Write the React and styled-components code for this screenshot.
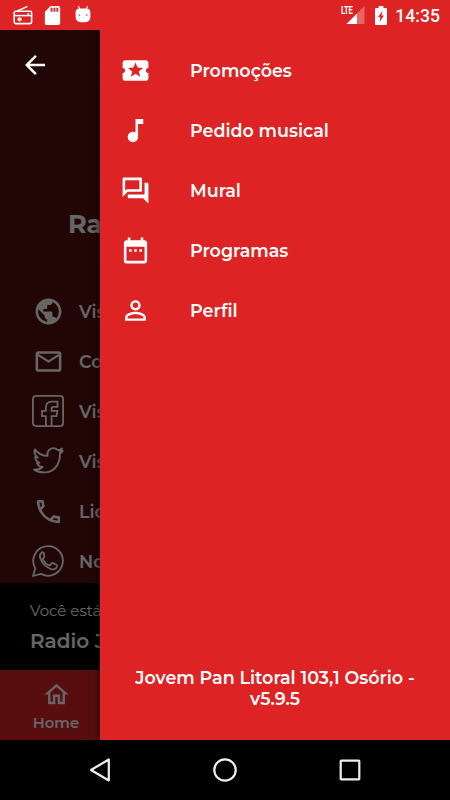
import React from "react";

import styled, { createGlobalStyle } from "styled-components";
import {
  MdArrowBack,
  MdDateRange,
  MdLocalActivity,
  MdMailOutline,
  MdMusicNote,
  MdOutlineHome,
  MdOutlinePhone,
  MdOutlineQuestionAnswer,
  MdPersonOutline,
  MdPublic,
  MdSdCard,
} from "react-icons/md";

// Icons
const RadioIcon = () => (
  <svg width="20" height="20" viewBox="0 0 20 20" fill="none" stroke="#fff">
    <path d="M4.5 6 14.5 1.3" strokeWidth="1.4" />
    <rect x="1.2" y="6.2" width="17.4" height="12.4" rx="1.6" strokeWidth="1.6" />
    <path d="M1.5 10.6h17" strokeWidth="1.5" />
    <path d="M15.2 8v2" strokeWidth="1.4" />
    <circle cx="6.6" cy="14.3" r="2.1" fill="#fff" stroke="none" />
  </svg>
);

const AndroidIcon = () => (
  <svg width="16" height="18" viewBox="0 0 16 18">
    <path d="M3.3 1 5 4.4M12.7 1 11 4.4" stroke="#fff" strokeWidth="1.1" />
    <path
      fill="#fff"
      d="M4.5 3.5h7A4 4 0 0 1 15.4 7.5v4.8a5 5 0 0 1-5 5H5.6a5 5 0 0 1-5-5V7.5A4 4 0 0 1 4.5 3.5z"
    />
    <circle cx="4.3" cy="10" r="1" fill="#e88080" />
    <circle cx="11.7" cy="10" r="1" fill="#e88080" />
  </svg>
);

const SignalIcon = () => (
  <svg width="19" height="18" viewBox="0 0 19 18">
    <path d="M18.5 0v18H.5z" fill="#fff" opacity=".3" />
    <path d="M11 7.5V18H.5z" fill="#fff" />
  </svg>
);

const BatteryIcon = () => (
  <svg width="12" height="19" viewBox="0 0 12 19">
    <path
      fill="#fff"
      fillRule="evenodd"
      d="M3.6 0h4.8v2H11q1 0 1 1v15q0 1-1 1H1q-1 0-1-1V3q0-1 1-1h2.6zM7.4 5 3 11h2.4l-.8 5L9 9.6H6.6z"
    />
  </svg>
);

const FacebookIcon = () => (
  <svg width="32" height="32" viewBox="0 0 32 32" fill="none" stroke="#fff" strokeWidth="1.8">
    <rect x="0.9" y="0.9" width="30.2" height="30.2" rx="3" />
    <path d="M13.9 31V21.2H10v-5.4h3.9v-3.4c0-3.6 2.2-5.7 5.6-5.7h6v5.2h-4.2c-1.3 0-1.7.6-1.7 1.8v2.1h5.8l-.9 5.4h-4.9V31" />
  </svg>
);

const TwitterIcon = () => (
  <svg
    width="32"
    height="32"
    viewBox="0 0 32 32"
    fill="none"
    stroke="#fff"
    strokeWidth="1.9"
    strokeLinejoin="round"
  >
    <path d="M2.8 4.4c3 3.9 7.7 6.4 12.7 6.5-.8-4.5 2-7.6 5.8-7.8 2 0 3.4.8 4.6 2 1.6-.2 3-.8 4.1-1.5-.5 1.5-1.3 2.5-2.3 3.1l3-.7c-.7 1.2-1.6 2-2.7 2.8C28.1 19.4 22 27.4 12.5 27.4c-4.1 0-7.7-1-10.4-2.8 3.8.2 6.5-.7 8.5-2.6-3-.4-5-2-5.6-4.1l2.5-.1c-2.7-1.1-4.3-3.3-4.3-5.9l2.6.7C2.8 10.3 1.9 7.7 2.8 4.4z" />
  </svg>
);

const WhatsappIcon = () => (
  <svg
    width="32"
    height="32"
    viewBox="0 0 32 32"
    fill="none"
    stroke="#fff"
    strokeWidth="1.8"
    strokeLinejoin="round"
  >
    <path d="M1 31l2.3-7.6A14.8 14.8 0 1 1 9 28.9z" />
    <path d="M11.5 7.5c-.6-.3-1.8-.1-2.3.6C7.7 9.7 7.5 11.8 8.5 14c2 4.5 6.2 8.8 11.2 10.3 2.1.6 4.6-.7 5.2-2.5.3-1 .1-1.7-.5-2l-3.4-1.7c-.6-.3-1-.2-1.4.3l-1.4 1.7c-.4.5-.8.5-1.3.3-3-1.3-4.7-3.3-6-5.8-.2-.4-.1-.8.2-1.2l1.1-1.4c.3-.4.3-.8.1-1.2z" />
  </svg>
);

const menus = [
  { name: "Promoções", icon: <MdLocalActivity /> },
  { name: "Pedido musical", icon: <MdMusicNote /> },
  { name: "Mural", icon: <MdOutlineQuestionAnswer /> },
  { name: "Programas", icon: <MdDateRange /> },
  { name: "Perfil", icon: <MdPersonOutline /> },
];

const contacts = [
  { id: "site", name: "Visite", icon: <MdPublic size={31} /> },
  { id: "email", name: "Contato", icon: <MdMailOutline size={31} /> },
  { id: "facebook", name: "Visite", icon: <FacebookIcon /> },
  { id: "twitter", name: "Visite", icon: <TwitterIcon /> },
  { id: "phone", name: "Licitar", icon: <MdOutlinePhone size={31} /> },
  { id: "whatsapp", name: "Nosso", icon: <WhatsappIcon /> },
];

const App = () => {
  return (
    <>
      <GlobalStyle />
      <Screen>
        <StatusBar>
          <StatusLeft>
            <RadioIcon />
            <MdSdCard size={23} />
            <AndroidIcon />
          </StatusLeft>
          <StatusRight>
            <Network>
              <Lte>LTE</Lte>
              <SignalIcon />
            </Network>
            <BatteryIcon />
            <Clock>14:35</Clock>
          </StatusRight>
        </StatusBar>

        <Page>
          <Content>
            <Title>Radio</Title>
            <ContactList>
              {contacts.map((v) => (
                <Contact key={v.id}>
                  <ContactIcon>{v.icon}</ContactIcon>
                  <p>{v.name}</p>
                </Contact>
              ))}
            </ContactList>
          </Content>
          <NowPlaying>
            <Caption>Você está</Caption>
            <Station>Radio Jovem</Station>
          </NowPlaying>
          <TabBar>
            <Tab>
              <MdOutlineHome size={29} />
              <p>Home</p>
            </Tab>
          </TabBar>

          <Dim />
          <BackBtn aria-label="Voltar">
            <MdArrowBack />
          </BackBtn>
          <Drawer>
            <MenuList>
              {menus.map((v) => (
                <MenuItem key={v.name}>
                  {v.icon}
                  <p>{v.name}</p>
                </MenuItem>
              ))}
            </MenuList>
            <Version>
              <p>Jovem Pan Litoral 103,1 Osório -</p>
              <p>v5.9.5</p>
            </Version>
          </Drawer>
        </Page>

        <NavBar>
          <svg width="24" height="26" viewBox="0 0 24 26">
            <path d="M20.8 2.5v21L3 13z" />
          </svg>
          <svg width="26" height="26" viewBox="0 0 26 26">
            <circle cx="13" cy="13" r="10.7" />
          </svg>
          <svg width="24" height="24" viewBox="0 0 24 24">
            <rect x="2.7" y="2.7" width="18.6" height="18.6" rx=".5" />
          </svg>
        </NavBar>
      </Screen>
    </>
  );
};

const GlobalStyle = createGlobalStyle`
  * {
    box-sizing: border-box;
  }
  body {
    margin: 0;
    background-color: #000;
  }
  p {
    margin: 0;
  }
  svg {
    display: block;
    flex-shrink: 0;
  }
`;

const Screen = styled.div`
  display: flex;
  flex-direction: column;
  width: 450px;
  height: 800px;
  overflow: hidden;
  color: #fff;
  font-family: Montserrat, Inter, sans-serif;
  white-space: nowrap;
`;

const StatusBar = styled.div`
  display: flex;
  align-items: center;
  justify-content: space-between;
  height: 30px;
  padding: 0 10px 0 13px;
  background-color: #dd2323;
`;

const StatusLeft = styled.div`
  display: flex;
  align-items: center;
  gap: 8px;
  & > svg:first-child {
    margin-bottom: 1px;
  }
  & > svg:last-child {
    margin: 0 0 3px 3px;
  }
`;

const StatusRight = styled.div`
  display: flex;
  align-items: center;
`;

const Network = styled.div`
  display: flex;
  align-items: flex-start;
  height: 18px;
  margin-right: 10px;
  & > svg {
    margin-left: -8px;
  }
`;

const Lte = styled.span`
  width: 13px;
  font: 700 11px/9px Roboto, sans-serif;
  letter-spacing: -0.5px;
  transform: scaleX(0.7);
  transform-origin: left;
`;

const Clock = styled.span`
  width: 45px;
  margin-left: 8px;
  padding-top: 2px;
  font: 500 17.6px/20px Roboto, sans-serif;
  text-align: right;
`;

const Page = styled.div`
  position: relative;
  display: flex;
  flex-direction: column;
  height: 710px;
  background-color: #560f11;
`;

const Content = styled.div`
  height: 553px;
  padding-top: 174px;
`;

const Title = styled.h1`
  margin: 0;
  padding-left: 68px;
  font-size: 25.5px;
  font-weight: 700;
  line-height: 40px;
`;

const ContactList = styled.div`
  display: flex;
  flex-direction: column;
  padding: 42px 0 0 32px;
`;

const Contact = styled.div`
  display: flex;
  align-items: center;
  gap: 15px;
  height: 50px;
  font-size: 17.5px;
  font-weight: 600;
`;

const ContactIcon = styled.div`
  display: flex;
  align-items: center;
  justify-content: center;
  width: 32px;
`;

const NowPlaying = styled.div`
  height: 87px;
  padding: 17px 0 0 30px;
  background-color: #000;
`;

const Caption = styled.p`
  font-size: 15px;
  line-height: 22px;
`;

const Station = styled.p`
  margin-top: 5px;
  font-size: 20px;
  font-weight: 600;
  line-height: 28px;
`;

const TabBar = styled.div`
  display: flex;
  height: 70px;
  background-color: #dd2323;
`;

const Tab = styled.div`
  display: flex;
  flex-direction: column;
  align-items: center;
  width: 112px;
  padding-top: 10px;
  font-size: 14.8px;
  font-weight: 600;
  & > p {
    margin-top: 4px;
    line-height: 20px;
  }
`;

const Dim = styled.div`
  position: absolute;
  inset: 0;
  background-color: rgba(0, 0, 0, 0.6);
`;

const BackBtn = styled.button`
  position: absolute;
  top: 20px;
  left: 20px;
  padding: 0;
  border: 0;
  background: none;
  color: #fff;
  font-size: 30px;
`;

const Drawer = styled.aside`
  position: absolute;
  top: 0;
  right: 0;
  display: flex;
  flex-direction: column;
  justify-content: space-between;
  width: 350px;
  height: 100%;
  padding: 10px 0 31px;
  background-color: #dd2323;
  box-shadow: 0 0 8px rgba(0, 0, 0, 0.8);
  clip-path: inset(0 0 0 -20px);
`;

const MenuList = styled.div`
  display: flex;
  flex-direction: column;
`;

const MenuItem = styled.div`
  display: flex;
  align-items: center;
  gap: 39.5px;
  height: 60px;
  padding-left: 19.5px;
  font-size: 17.5px;
  font-weight: 600;
  & > svg {
    width: 31px;
    height: 31px;
  }
`;

const Version = styled.div`
  font-size: 17.5px;
  font-weight: 600;
  line-height: 21px;
  text-align: center;
`;

const NavBar = styled.div`
  display: flex;
  align-items: center;
  justify-content: space-between;
  height: 60px;
  padding: 0 88px;
  background-color: #000;
  & > svg {
    fill: none;
    stroke: #eee;
    stroke-width: 2.2;
    stroke-linejoin: round;
  }
`;

export default App;
